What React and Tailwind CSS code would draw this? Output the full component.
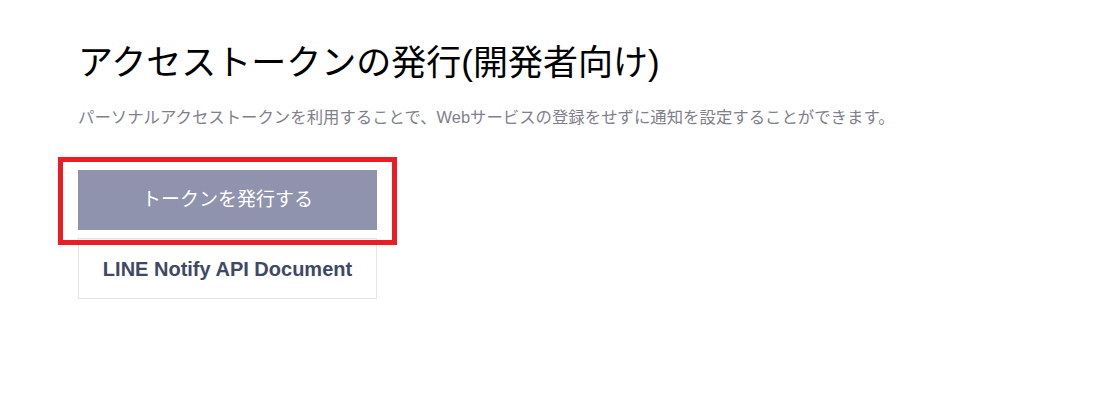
import React from 'react';

const font = { fontFamily: '"Liberation Sans", "Noto Sans CJK JP", sans-serif' };

export default function App() {
  return (
    <div className="w-[1093px] h-[408px] bg-white pl-[78px] pt-[40px]" style={font}>
      <h1 className="text-[35px] leading-[46px] text-black font-normal">アクセストークンの発行(開発者向け)</h1>
      <p className="mt-[19px] text-[16.4px] leading-[24px] text-[#7f808c]">
        パーソナルアクセストークンを利用することで、Webサービスの登録をせずに通知を設定することができます。
      </p>

      <div className="relative mt-[41px] w-[299px]">
        <button className="w-[299px] h-[60px] bg-[#8f93ad] text-white text-[19px] flex items-center justify-center">
          トークンを発行する
        </button>
        {/* annotation frame */}
        <div className="absolute -left-[20px] -top-[13px] w-[339px] h-[88px] border-[5px] border-[#ed1c24] pointer-events-none" />
      </div>

      <button className="mt-[8px] w-[299px] h-[61px] border border-[#e6e6e6] bg-white text-[20px] font-bold text-[#404866] flex items-center justify-center">
        LINE Notify API Document
      </button>
    </div>
  );
}
